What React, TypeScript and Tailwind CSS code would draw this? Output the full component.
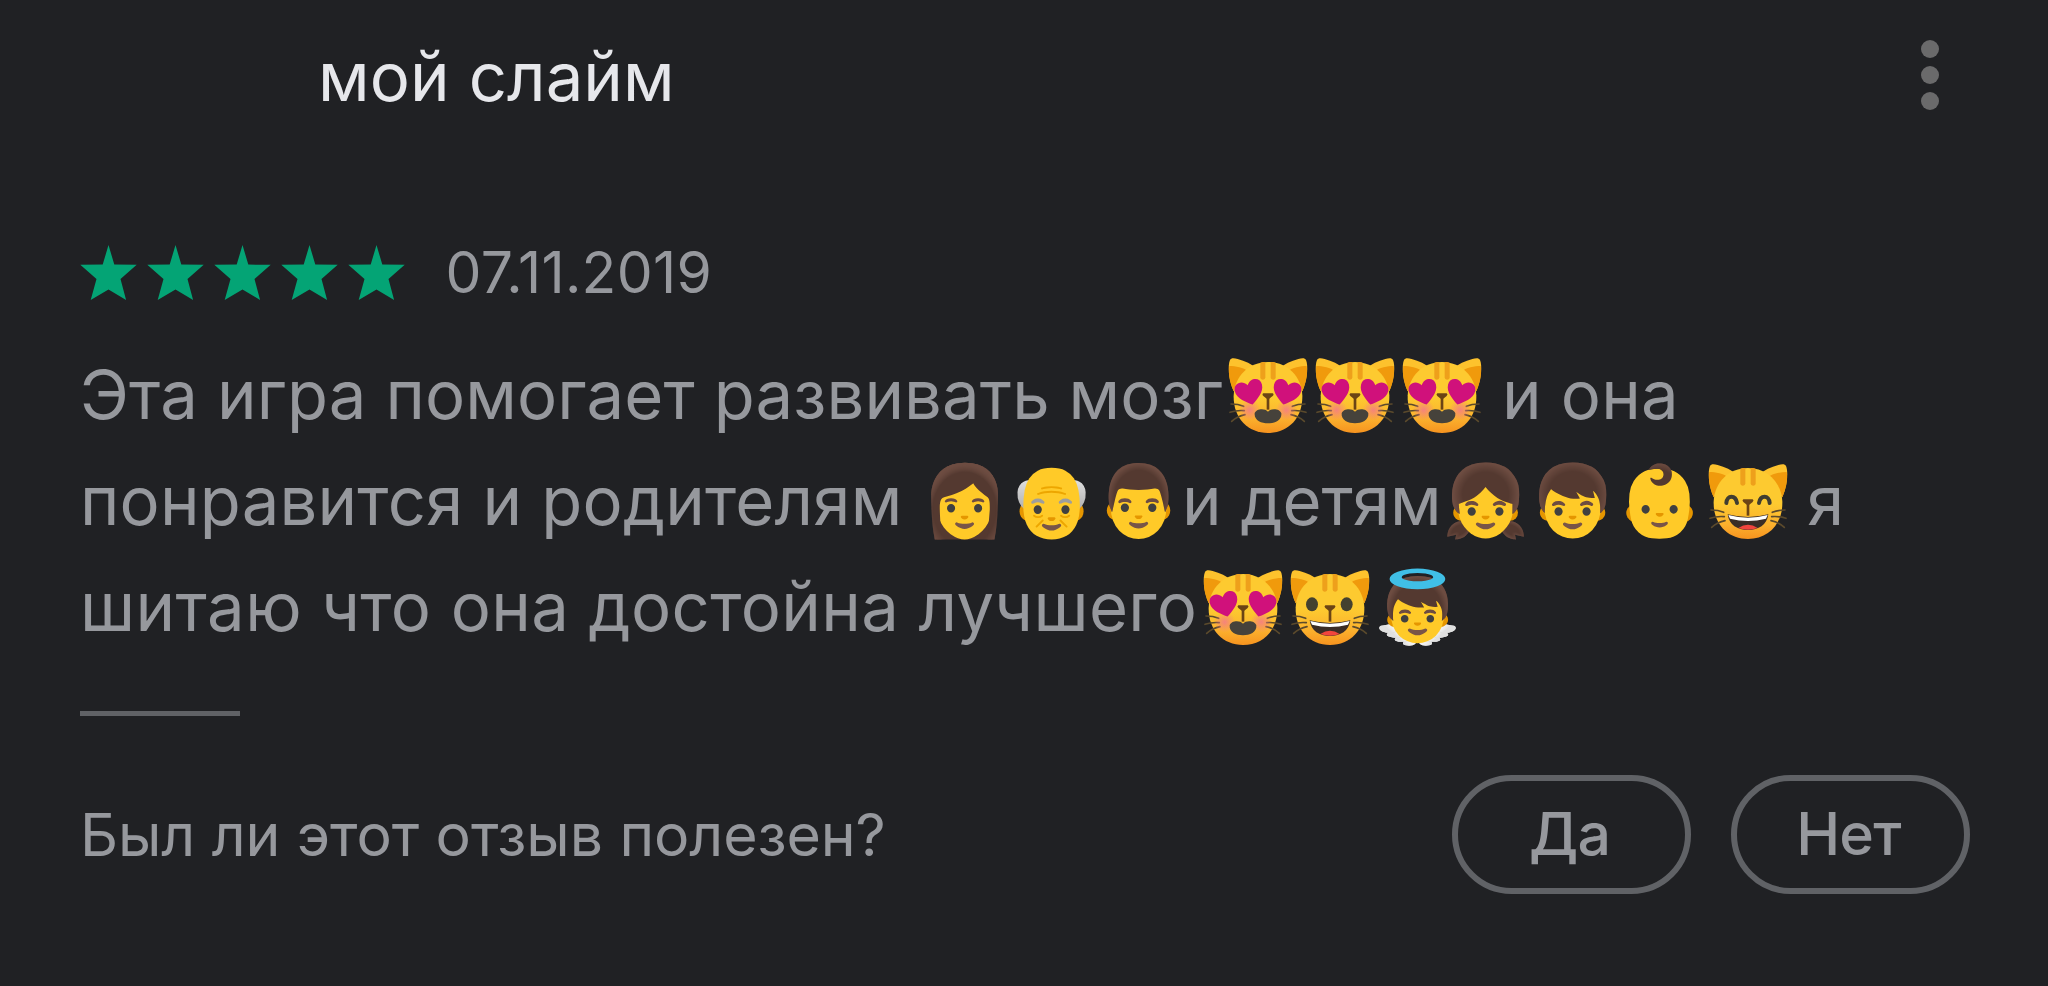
import React, { useState } from "react";

type CatMood = "love" | "grin" | "smile";

type Segment = {
  text?: string;
  emoji?: boolean;
  cats?: CatMood[];
  className?: string;
};

const reviewLines: Segment[][] = [
  [
    { text: "Эта игра помогает развивать мозг", className: "w-[1149px] tracking-[0.1px]" },
    { cats: ["love", "love", "love"], className: "w-[273px]" },
    { text: "и она", className: "tracking-[0.2px]" },
  ],
  [
    { text: "понравится и родителям", className: "w-[841px] tracking-[0.2px]" },
    { text: "👩👴👨", emoji: true, className: "w-[261px]" },
    { text: "и детям", className: "w-[260px]" },
    { text: "👧👦👶", emoji: true, className: "w-[267px]" },
    { cats: ["grin"], className: "w-[98px]" },
    { text: "я" },
  ],
  [
    { text: "шитаю что она достойна лучшего", className: "w-[1124px] tracking-[0.4px]" },
    { cats: ["love", "smile"], className: "w-[170px]" },
    { text: "👼", emoji: true },
  ],
];

const catNames: Record<CatMood, string> = {
  love: "Влюблённый кот",
  grin: "Смеющийся кот",
  smile: "Улыбающийся кот",
};

const heart = "M0 40C-16 28-42 12-42-12C-42-34-14-42 0-20C14-42 42-34 42-12C42 12 16 28 0 40Z";

const Cat = ({ mood }: { mood: CatMood }) => (
  <svg
    viewBox="0 0 234 225"
    className="shrink-0 w-[78px] h-[75px] translate-y-[14px] overflow-visible"
    role="img"
    aria-label={catNames[mood]}
  >
    <defs>
      <linearGradient id="cat-face" x1="0" y1="0" x2="0" y2="1">
        <stop offset="0.5" stopColor="#fdca30" />
        <stop offset="0.8" stopColor="#fbb02d" />
        <stop offset="1" stopColor="#f6931f" />
      </linearGradient>
      <radialGradient id="cat-blush">
        <stop offset="0" stopColor="#f4798a" stopOpacity="0.85" />
        <stop offset="1" stopColor="#f4798a" stopOpacity="0" />
      </radialGradient>
    </defs>
    {/* ears */}
    <path d="M14 100C-2 62-4 22 3 6C6-1 16 0 26 3C48 9 68 18 84 32Z" fill="#fdc22d" />
    <path d="M220 100C236 62 238 22 231 6C228-1 218 0 208 3C186 9 166 18 150 32Z" fill="#fdc22d" />
    <path d="M14 100C0 68-2 44 1 24C20 24 42 28 62 42C42 56 24 76 14 100Z" fill="#f09a0c" />
    <path d="M220 100C234 68 236 44 233 24C214 24 192 28 172 42C192 56 210 76 220 100Z" fill="#f09a0c" />
    {/* head */}
    <path
      d="M117 12C174 12 217 54 220 112C222 180 178 225 117 225C56 225 12 180 14 112C17 54 60 12 117 12Z"
      fill="url(#cat-face)"
    />
    <path d="M94 14C99 12 105 12 109 12V58Q109 65 102 65Q94 65 94 58Z" fill="#eea01b" />
    <path d="M140 14C135 12 129 12 125 12V58Q125 65 132 65Q140 65 140 58Z" fill="#eea01b" />
    {/* whiskers */}
    <g fill="none" stroke="#5b4a2c" strokeWidth="5" strokeLinecap="round">
      <path d="M6 138Q28 138 44 145" />
      <path d="M3 163Q24 156 46 158" />
      <path d="M8 190Q26 174 48 170" />
      <path d="M228 138Q206 138 190 145" />
      <path d="M231 163Q210 156 188 158" />
      <path d="M226 190Q208 174 186 170" />
    </g>
    {mood === "love" && (
      <>
        <circle cx="62" cy="156" r="32" fill="url(#cat-blush)" />
        <circle cx="172" cy="156" r="32" fill="url(#cat-blush)" />
        <path d={heart} transform="translate(61 101) rotate(-14)" fill="#d0117b" />
        <path d={heart} transform="translate(173 101) rotate(14)" fill="#d0117b" />
        <path
          d="M117 161C108 149 80 152 77 166C75 187 97 196 117 196C137 196 159 187 157 166C154 152 126 149 117 161Z"
          fill="#46423b"
        />
      </>
    )}
    {mood === "grin" && (
      <g fill="none" stroke="#403d31" strokeWidth="12" strokeLinecap="round">
        <path d="M52 117C54 92 80 92 84 117" />
        <path d="M150 117C154 92 180 92 182 117" />
      </g>
    )}
    {mood === "smile" && (
      <g fill="#44412f">
        <ellipse cx="63" cy="103" rx="18" ry="21" />
        <ellipse cx="167" cy="103" rx="18" ry="21" />
      </g>
    )}
    {mood !== "love" && (
      <>
        <path d="M56 151Q117 167 178 151C174 184 148 198 117 198C86 198 60 184 56 151Z" fill="#3b2d26" />
        <path d="M58 153Q117 169 176 153L171 164Q117 178 63 164Z" fill="#fff" />
        <path d="M88 192Q117 172 146 192Q117 203 88 192Z" fill="#f2453d" />
      </>
    )}
    {/* nose */}
    <path d="M117 118V155" stroke="#6b4415" strokeWidth="8" />
    <path d="M103 106H131Q136 109 131 114L117 125L103 114Q98 109 103 106Z" fill="#6b4415" />
  </svg>
);

const Star = () => (
  <svg viewBox="0 0 56.4 55" className="w-[57px] h-[55px] fill-[#04a475]">
    <path d="M28.2 0 34 19.6 56.4 19.8 40.2 34 45.8 55 28.2 44.4 10.4 55 16.2 34 0 19.8 22.4 19.6Z" />
  </svg>
);

const MenuButton = () => (
  <button className="flex flex-col items-center gap-2 w-9 mt-1 mr-[100px]" aria-label="Меню">
    <span className="size-[18px] rounded-full bg-[#6a6a6b]" />
    <span className="size-[18px] rounded-full bg-[#6a6a6b]" />
    <span className="size-[18px] rounded-full bg-[#6a6a6b]" />
  </button>
);

const VoteButton = ({
  label,
  selected,
  onPress,
}: {
  label: string;
  selected: boolean;
  onPress: () => void;
}) => (
  <button
    onClick={onPress}
    className={`flex items-center justify-center w-[239px] h-[119px] pr-1 rounded-full border-[6px] border-[#606266] text-[59px] leading-[72px] font-medium tracking-[-0.8px] ${
      selected ? "bg-[#303134]" : ""
    }`}
  >
    {label}
  </button>
);

const ReviewSegment = ({ segment }: { segment: Segment }) => {
  if (segment.cats) {
    return (
      <span className={`flex items-baseline shrink-0 gap-[9px] ${segment.className ?? ""}`}>
        {segment.cats.map((mood, i) => (
          <Cat key={i} mood={mood} />
        ))}
      </span>
    );
  }
  return (
    <span
      className={`shrink-0 ${segment.emoji ? "text-[70px] leading-[70px]" : ""} ${
        segment.className ?? ""
      }`}
    >
      {segment.text}
    </span>
  );
};

const App = () => {
  const [vote, setVote] = useState<"yes" | "no" | null>(null);

  return (
    <div className="w-full h-screen overflow-hidden bg-[#202124] text-[#96989d] font-['Inter',sans-serif] pl-20 pt-9">
      <header className="flex items-start justify-between h-20">
        <h1 className="pl-[238px] pt-px text-[67px] leading-[80px] tracking-[0.1px] text-[#e6e7eb]">
          мой слайм
        </h1>
        <MenuButton />
      </header>

      <div className="flex items-center h-[60px] mt-[126px]">
        <div className="flex gap-[9.9px]">
          {[1, 2, 3, 4, 5].map((n) => (
            <Star key={n} />
          ))}
        </div>
        <span className="ml-[41px] pt-[2px] text-[57px] leading-[60px] tracking-[0.3px]">07.11.2019</span>
      </div>

      <div className="mt-10 text-[67px] leading-[106px]">
        {reviewLines.map((line, i) => (
          <p key={i} className="flex items-baseline h-[106.2px] whitespace-nowrap">
            {line.map((segment, j) => (
              <ReviewSegment key={j} segment={segment} />
            ))}
          </p>
        ))}
      </div>

      <div className="w-40 h-[5px] mt-[50.4px] bg-[#606266]" />

      <footer className="flex items-center justify-between mt-[59px] pr-[78px]">
        <span className="pt-px text-[59px] leading-[72px] tracking-[-0.1px]">Был ли этот отзыв полезен?</span>
        <div className="flex gap-10">
          <VoteButton label="Да" selected={vote === "yes"} onPress={() => setVote("yes")} />
          <VoteButton label="Нет" selected={vote === "no"} onPress={() => setVote("no")} />
        </div>
      </footer>
    </div>
  );
};

export default App;
